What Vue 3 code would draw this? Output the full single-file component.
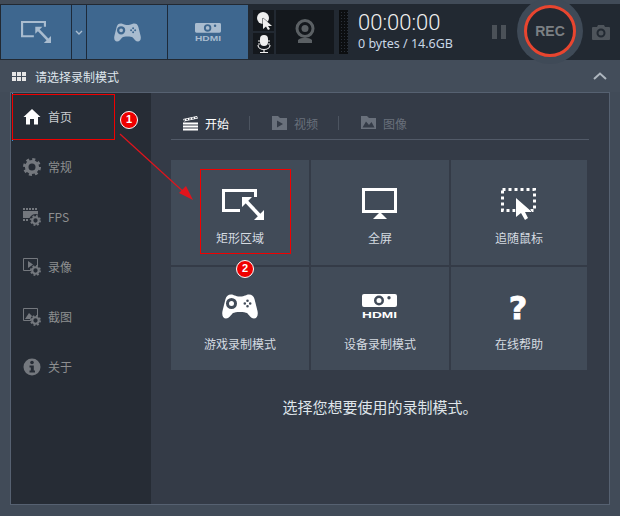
<script setup>
const modeIcon = [
  { id: 'i-rect', label: '矩形区域' },
  { id: 'i-screen', label: '全屏' },
  { id: 'i-follow', label: '追随鼠标' },
  { id: 'i-game', label: '游戏录制模式' },
  { id: 'i-hdmi', label: '设备录制模式' },
  { id: 'i-help', label: '在线帮助' }
]

const navItems = [
  { id: 'i-home', label: '首页', active: true },
  { id: 'i-gear', label: '常规' },
  { id: 'i-fps', label: 'FPS' },
  { id: 'i-video', label: '录像' },
  { id: 'i-image', label: '截图' },
  { id: 'i-info', label: '关于' }
]

const tabs = [
  { id: 'i-clap', label: '开始', active: true },
  { id: 'i-folder-video', label: '视频' },
  { id: 'i-folder-image', label: '图像' }
]
</script>

<template>
  <div class="app">
    <svg class="defs" width="0" height="0">
      <defs>
        <g id="i-rect">
          <path d="M24 22.5H7.5V2.5H39.5V9" fill="none" stroke="currentColor" stroke-width="3" />
          <path d="M29 12L45 29" stroke="currentColor" stroke-width="3.6" />
          <path d="M26 9H36L26 19ZM48 32H38L48 22Z" fill="currentColor" />
        </g>
        <g id="i-screen">
          <rect x="7.5" y="1.5" width="32" height="22" fill="none" stroke="currentColor" stroke-width="3" />
          <path d="M24 24L31 31H17Z" fill="currentColor" />
        </g>
        <g id="i-follow">
          <rect x="7.5" y="1.5" width="32" height="21" fill="none" stroke="currentColor" stroke-width="3" stroke-dasharray="3 3" />
          <path d="M21 10V29L26 25L30 32L33 30L30 24H37Z" fill="currentColor" stroke="#414b58" stroke-width="1" paint-order="stroke" />
        </g>
        <g id="i-game">
          <path fill="currentColor" fill-rule="evenodd" d="M15 .5C12 .5 10.500 2 9.500 5L6.500 17C5.500 22 7.500 24.500 10 24.500C13 24.500 15 21 17 19C19 17.500 29 17.500 31 19C33 21 35 24.500 38 24.500C40.500 24.500 42.500 22 41.500 17L38.500 5C37.500 2 36 .5 33 .5C30 .5 29 2.500 24 2.500C19 2.500 18 .5 15 .5ZM15.500 4A5.500 5.500 0 1 0 15.500 15A5.500 5.500 0 1 0 15.500 4ZM15.500 7A2.500 2.500 0 1 1 15.500 12A2.500 2.500 0 1 1 15.500 7ZM31.500 5.500A1.300 1.300 0 1 0 31.500 8.100A1.300 1.300 0 1 0 31.500 5.500ZM31.500 10.900A1.300 1.300 0 1 0 31.500 13.500A1.300 1.300 0 1 0 31.500 10.900ZM28.800 8.200A1.300 1.300 0 1 0 28.800 10.800A1.300 1.300 0 1 0 28.800 8.200ZM34.200 8.200A1.300 1.300 0 1 0 34.200 10.800A1.300 1.300 0 1 0 34.200 8.200Z" />
        </g>
        <g id="i-hdmi">
          <path fill="currentColor" fill-rule="evenodd" d="M8 0H39A2 2 0 0 1 41 2V11A2 2 0 0 1 39 13H8A2 2 0 0 1 6 11V2A2 2 0 0 1 8 0ZM23 1.500A5 5 0 1 0 23 11.500A5 5 0 1 0 23 1.500ZM23 4A2.500 2.500 0 1 1 23 9A2.500 2.500 0 1 1 23 4ZM33 2A1.700 1.700 0 1 0 33 5.400A1.700 1.700 0 1 0 33 2Z" />
          <text x="6" y="24" textLength="35" lengthAdjust="spacingAndGlyphs" font-family="'Liberation Sans', sans-serif" font-weight="700" font-size="9.500" fill="currentColor">HDMI</text>
        </g>
        <g id="i-help">
          <text x="23" y="24.500" text-anchor="middle" font-family="'DejaVu Sans', sans-serif" font-weight="700" font-size="32" fill="currentColor" stroke="currentColor" stroke-width=".8">?</text>
        </g>
        <g id="i-home">
          <path fill="currentColor" d="M9 1L17.500 9H15V16.500H11V11H7V16.500H3V9H.5Z" />
        </g>
        <g id="i-gear">
          <circle cx="9" cy="9" r="5.300" fill="none" stroke="currentColor" stroke-width="3.600" />
          <circle cx="9" cy="9" r="7.600" fill="none" stroke="currentColor" stroke-width="2.800" stroke-dasharray="3 2.970" />
        </g>
        <g id="i-fps">
          <path d="M0 1H15M0 12H8" fill="none" stroke="currentColor" stroke-width="2" stroke-dasharray="2 1" />
          <rect x="0" y="3" width="15" height="7" fill="currentColor" />
          <circle cx="12.500" cy="12.500" r="6.500" fill="#262c35" />
          <use href="#i-gear" transform="translate(7 7) scale(.61)" />
        </g>
        <g id="i-video">
          <path d="M.5 .5H14.500V8M8 12.500H.5V.5" fill="none" stroke="currentColor" />
          <path d="M5 3L10 6.500L5 10Z" fill="currentColor" />
          <use href="#i-gear" transform="translate(7 7) scale(.61)" />
        </g>
        <g id="i-image">
          <path d="M.5 .5H14.500V8M8 12.500H.5V.5" fill="none" stroke="currentColor" />
          <path d="M2 11L6 5L9 8L7 11Z" fill="currentColor" />
          <use href="#i-gear" transform="translate(7 7) scale(.61)" />
        </g>
        <g id="i-info">
          <circle cx="9" cy="9" r="8.500" fill="currentColor" />
          <circle cx="9" cy="4.500" r="1.800" fill="#262c35" />
          <path d="M6.500 7.500H10.800V12.500H12V14.500H6.500V12.500H7.800V9.500H6.500Z" fill="#262c35" />
        </g>
        <g id="i-clap">
          <path fill="currentColor" d="M0 3L14 0L15 2.500L1 5.500Z" />
          <path d="M.5 4.300L14.500 1.300" stroke="#343b47" stroke-width="1.200" stroke-dasharray="1.500 1.500" />
          <path fill="currentColor" d="M0 6.500H15V8.500H0ZM0 9.500H15V11.500H0ZM0 12.500H15V14.500H0Z" />
        </g>
        <g id="i-folder-video">
          <path fill="currentColor" fill-rule="evenodd" d="M0 0H6L8 2H15V14H0ZM5 4.500V11.500L11 8Z" />
        </g>
        <g id="i-folder-image">
          <path fill="currentColor" fill-rule="evenodd" d="M0 0H6L8 2H15V13H0ZM1.500 11.500H13.500L10.500 6L8 9L5 5.500Z" />
        </g>
      </defs>
    </svg>

    <div class="toolbar">
      <div class="modes">
        <button class="mode mode-wide">
          <svg viewBox="6 0 42 33" width="30" height="24"><use href="#i-rect" /></svg>
        </button>
        <button class="mode mode-caret">
          <svg width="8" height="5" viewBox="0 0 8 5"><path d="M1 1L4 4L7 1" fill="none" stroke="currentColor" stroke-width="1.400" /></svg>
        </button>
        <button class="mode">
          <svg viewBox="6 0 36 25" width="27" height="19"><use href="#i-game" /></svg>
        </button>
        <button class="mode">
          <svg viewBox="6 0 35 24" width="26" height="18"><use href="#i-hdmi" /></svg>
        </button>
      </div>

      <div class="mini-col">
        <div class="mini">
          <svg width="21" height="21" viewBox="0 0 21 21">
            <circle cx="10" cy="8" r="6" fill="#eee" />
            <path d="M10 8V19L13 16.500L15 20L17 19L15 16H19Z" fill="#eee" stroke="#14181d" stroke-width="1" paint-order="stroke" />
          </svg>
        </div>
        <div class="mini">
          <svg width="21" height="21" viewBox="0 0 21 21">
            <rect x="7" y="2" width="8" height="11" rx="4" fill="#eee" />
            <path d="M5 8H7M15 8H17M5 11H7M15 11H17" stroke="#eee" />
            <path d="M5 12C5 18 17 18 17 12M11 16V19M7 19.500H15" fill="none" stroke="#eee" stroke-width="1.200" />
          </svg>
        </div>
      </div>

      <div class="webcam">
        <svg width="20" height="26" viewBox="0 0 20 26">
          <circle cx="10" cy="9.500" r="8" fill="none" stroke="#5b6064" stroke-width="3" />
          <circle cx="10" cy="9.500" r="3.500" fill="#5b6064" />
          <path d="M3 21C6 18 14 18 17 21V24H3Z" fill="#5b6064" />
        </svg>
      </div>

      <div class="meter"></div>

      <div class="clock">
        <div class="time">00:00:00</div>
        <div class="bytes">0 bytes / 14.6GB</div>
      </div>

      <div class="pause"><span></span><span></span></div>

      <div class="rec-ring">
        <div class="rec">REC</div>
      </div>

      <svg class="camera" width="18" height="15" viewBox="0 0 18 15">
        <path fill="#4e545b" fill-rule="evenodd" d="M1 2H5L6 0H12L13 2H17A1 1 0 0 1 18 3V14A1 1 0 0 1 17 15H1A1 1 0 0 1 0 14V3A1 1 0 0 1 1 2ZM9 3.500A4.500 4.500 0 1 0 9 12.500A4.500 4.500 0 1 0 9 3.500ZM9 5.500A2.500 2.500 0 1 1 9 10.500A2.500 2.500 0 1 1 9 5.500Z" />
      </svg>
    </div>

    <div class="panel-head">
      <div class="dots"><i v-for="n in 6" :key="n"></i></div>
      <span class="panel-title">请选择录制模式</span>
      <svg class="collapse" width="14" height="8" viewBox="0 0 14 8"><path d="M1 7L7 1.500L13 7" fill="none" stroke="#aeb6be" stroke-width="2" /></svg>
    </div>

    <div class="frame">
      <nav class="sidebar">
        <div v-for="item in navItems" :key="item.label" class="nav-item" :class="{ active: item.active }">
          <svg width="18" height="18" viewBox="0 0 18 18"><use :href="'#' + item.id" /></svg>
          <span>{{ item.label }}</span>
        </div>
      </nav>

      <main class="content">
        <div class="tabs">
          <template v-for="(tab, i) in tabs" :key="tab.label">
            <span v-if="i > 0" class="tab-sep"></span>
            <div class="tab" :class="{ active: tab.active }">
              <svg width="15" height="15" viewBox="0 0 15 15"><use :href="'#' + tab.id" /></svg>
              <span>{{ tab.label }}</span>
            </div>
          </template>
        </div>

        <div class="grid">
          <div v-for="cell in modeIcon" :key="cell.label" class="cell">
            <svg width="48" height="34" viewBox="0 0 48 34"><use :href="'#' + cell.id" /></svg>
            <span>{{ cell.label }}</span>
          </div>
        </div>

        <p class="hint">选择您想要使用的录制模式。</p>
      </main>
    </div>

    <!-- annotations drawn over the window -->
    <div class="mark mark-nav"></div>
    <div class="mark mark-cell"></div>
    <svg class="arrow" width="620" height="516" viewBox="0 0 620 516">
      <path d="M120 134L187 195" stroke="#e0141c" stroke-width="1.200" />
      <path d="M193 200L179 193L186 186Z" fill="#e0141c" />
    </svg>
    <div class="badge badge-one">1</div>
    <div class="badge badge-two">2</div>
  </div>
</template>

<style>
body {
  margin: 0;
  background: #414b58;
}
</style>

<style scoped>
.app {
  position: relative;
  width: 620px;
  height: 516px;
  overflow: hidden;
  padding-top: 4px;
  box-sizing: border-box;
  background: #414b58;
  font-family: "Noto Sans CJK SC", "Noto Sans", sans-serif;
  font-size: 12px;
}

.defs {
  position: absolute;
}

.toolbar {
  display: flex;
  align-items: center;
  height: 56px;
  background: #222932;
}

.modes {
  display: flex;
  gap: 1px;
  height: 54px;
  margin-left: 1px;
  background: #1d2a3a;
}

.mode {
  display: flex;
  align-items: center;
  justify-content: center;
  width: 80px;
  padding: 0;
  border: 0;
  background: #3e678f;
  color: #a9bccf;
}

.mode-wide {
  width: 70px;
}

.mode-caret {
  width: 14px;
}

.mini-col {
  display: flex;
  flex-direction: column;
  gap: 2px;
  margin-left: 5px;
}

.mini {
  width: 21px;
  height: 21px;
  background: #14181d;
}

.mini svg,
.webcam svg {
  display: block;
}

.webcam {
  display: flex;
  align-items: center;
  justify-content: center;
  width: 58px;
  height: 44px;
  margin-left: 2px;
  background: #14181d;
}

.meter {
  width: 9px;
  height: 44px;
  margin-left: 5px;
  background-color: #2a3039;
  background-image:
    linear-gradient(#0c0e10 2px, transparent 2px),
    linear-gradient(90deg, #0c0e10 2px, transparent 2px);
  background-size: 3px 3px;
}

.clock {
  width: 120px;
  margin-left: 10px;
}

.time {
  font-family: Roboto, sans-serif;
  font-size: 22px;
  font-weight: 300;
  line-height: 22px;
  color: #f0f0f0;
}

.bytes {
  margin-top: 2px;
  font-family: "Noto Sans", sans-serif;
  font-size: 12.500px;
  line-height: 16px;
  color: #c9d7e6;
}

.pause {
  display: flex;
  gap: 4px;
  margin-left: 14px;
}

.pause span {
  width: 5px;
  height: 14px;
  background: #4b5158;
}

.rec-ring {
  display: flex;
  align-items: center;
  justify-content: center;
  flex: none;
  width: 66px;
  height: 66px;
  margin: -2px 0 0 11px;
  border-radius: 50%;
  background: #3f4a57;
}

.rec {
  width: 46px;
  height: 46px;
  border: 3px solid #e8452f;
  border-radius: 50%;
  background: #222932;
  font-family: "Liberation Sans", sans-serif;
  font-size: 14px;
  font-weight: 700;
  line-height: 46px;
  text-align: center;
  color: #7c8084;
}

.camera {
  margin-left: 9px;
}

.panel-head {
  display: flex;
  align-items: center;
  height: 32px;
  padding: 0 13px 0 12px;
  background: #434d5a;
}

.dots {
  display: grid;
  grid-template-columns: repeat(3, 4px);
  grid-auto-rows: 4px;
  gap: 1px;
}

.dots i {
  background: #e6e6e6;
}

.panel-title {
  margin-left: 9px;
  color: #dfe6ec;
}

.collapse {
  margin-left: auto;
}

.frame {
  display: flex;
  height: 411px;
  margin: 0 10px;
  border: 1px solid #566171;
}

.sidebar {
  width: 140px;
  flex: none;
  background: #262c35;
}

.nav-item {
  position: relative;
  display: flex;
  align-items: center;
  gap: 7px;
  height: 50px;
  box-sizing: border-box;
  padding: 0 0 2px 12px;
  color: #74787e;
}

.nav-item span {
  margin-bottom: 2px;
  color: #8d8f90;
}

.nav-item.active {
  color: #fff;
}

.nav-item.active span {
  color: #c9ccd0;
}

.nav-item.active::before {
  content: "";
  position: absolute;
  left: 1px;
  top: 0;
  height: 48px;
  width: 1px;
  background: #3a8fd8;
}

.content {
  flex: 1;
  padding: 0 20px;
  background: #343b47;
}

.tabs {
  display: flex;
  align-items: center;
  height: 32px;
  padding: 14px 0 0 12px;
  border-bottom: 1px solid #525a68;
}

.tab {
  display: flex;
  align-items: center;
  gap: 7px;
  color: #69707b;
}

.tab.active {
  color: #fff;
}

.tab-sep {
  width: 1px;
  height: 14px;
  margin: 0 22px 0 20px;
  background: #4c5460;
}

.grid {
  display: grid;
  grid-template-columns: 138px 138px 136px;
  grid-template-rows: 105px 103px;
  gap: 2px;
  margin-top: 20px;
}

.cell {
  display: flex;
  flex-direction: column;
  align-items: center;
  gap: 8px;
  padding-top: 28px;
  box-sizing: border-box;
  background: #414b58;
  color: #fff;
}

.cell:nth-child(n + 4) {
  padding-top: 27px;
}

.cell span {
  line-height: 16px;
  color: #d5dbe1;
}

.hint {
  margin: 27px 0 0;
  font-size: 15px;
  line-height: 20px;
  text-align: center;
  color: #dfe5ea;
}

.mark {
  position: absolute;
  box-sizing: border-box;
  border: 1px solid #f00000;
}

.mark-nav {
  left: 12px;
  top: 94px;
  width: 103px;
  height: 46px;
}

.mark-cell {
  left: 200px;
  top: 169px;
  width: 91px;
  height: 85px;
}

.arrow {
  position: absolute;
  left: 0;
  top: 0;
}

.badge {
  position: absolute;
  width: 18px;
  height: 18px;
  box-sizing: border-box;
  border: 1.500px solid #fff;
  border-radius: 50%;
  background: #f00000;
  font-family: "Liberation Sans", sans-serif;
  font-size: 11px;
  font-weight: 700;
  line-height: 15px;
  text-align: center;
  color: #fff;
}

.badge-one {
  left: 120px;
  top: 111px;
}

.badge-two {
  left: 236px;
  top: 260px;
}
</style>
